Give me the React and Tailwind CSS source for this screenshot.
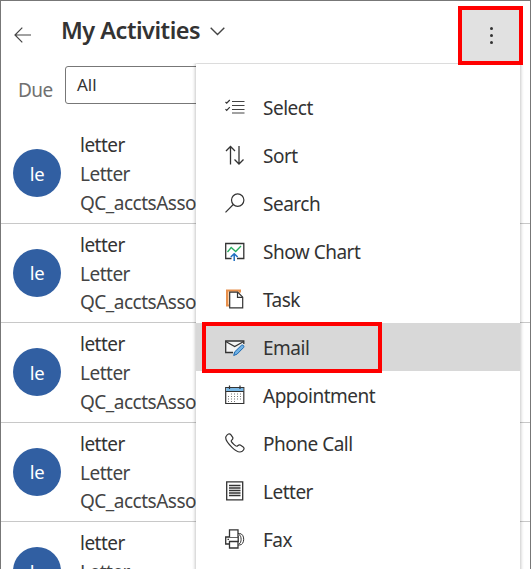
import React from "react";

function Svg({ children }) {
  return (
    <svg width="20" height="20" viewBox="0 0 20 20" fill="none" stroke="#333" strokeWidth="1.2" className="shrink-0">
      {children}
    </svg>
  );
}

const icons = {
  select: (
    <Svg>
      <path d="M7 4.500h12.500M7 8.500h12.500M7 12.500h12.500M7 16h12.500" stroke="#444" />
      <path d="M.5 5l1.200 1.200L4.800 3M.5 12.200l1.200 1.200 3.100-3.200" />
    </Svg>
  ),
  sort: (
    <Svg>
      <path d="M5.500 19.500V1.500M1 6L5.500 1.500 10 6M14 1v18M9.500 14.500l4.500 4.500 4.500-4.500" strokeWidth="1.300" />
    </Svg>
  ),
  search: (
    <Svg>
      <circle cx="12.700" cy="7.100" r="6.200" />
      <path d="M8.300 11.500L.5 19.300" />
    </Svg>
  ),
  chart: (
    <Svg>
      <path d="M6.500 17.500H.7V2.500h18.100v15H12" strokeWidth="1.300" />
      <path d="M2.500 11L6.200 6.500l4.500 4L16 5" stroke="#27ae60" strokeWidth="1.300" />
      <path d="M9.200 20v-7M5.800 16l3.400-3.300 3.400 3.300" stroke="#1f6fc0" strokeWidth="1.500" />
    </Svg>
  ),
  task: (
    <Svg>
      <path d="M4 16.500H2V1.500h13v2" stroke="#e8904c" strokeWidth="2" fill="#fbd0a8" />
      <path d="M4.700 3.200h8l5 5v10.600h-13z" fill="#fff" />
      <path d="M12.500 3.200v5.200h5.200" />
    </Svg>
  ),
  email: (
    <Svg>
      <path d="M8 15.500H.7V4h18.100v3" fill="#f4f4f4" strokeWidth="1.300" />
      <path d="M.7 4.500L9.700 9.500l9-5" />
      <path d="M8.700 18.500l1.100-3.700 6.600-6.500c1.500-1 3.200.7 2.200 2.200l-6.500 6.600z" fill="#71b2e5" stroke="#1b68b0" strokeWidth="1" />
    </Svg>
  ),
  appointment: (
    <Svg>
      <path d="M.7 2.500h18.100v16H.7z" fill="#fff" />
      <path d="M1.300 3h17v3.500h-17z" fill="#78b7e5" stroke="none" />
      <path d="M.7 6.500h18.100M4.500.5v3.500M15 .5v3.500" />
      <path d="M6 9h11M3 11.500h14M3 14h14M3 16.500h9" stroke="#777" strokeDasharray="1 2" />
    </Svg>
  ),
  phone: (
    <Svg>
      <path d="M1 3.500C2.500 1 4.500 0 5.800 1.600l1.900 2.800c.7 1.200-.2 2.100-1.200 3-.8.800.1 1.700 2.300 3.900 1.700 1.700 2.700 2.500 3.600 1.700 1-.9 1.700-1.700 2.900-1l2.900 1.900c1.600 1.200.7 3.200-1 4.400-2.600 1.700-6.500-.2-10.200-3.900C2.600 10.100-.4 6.500 1 3.500z" />
    </Svg>
  ),
  letter: (
    <Svg>
      <path d="M1.700.8h16v18h-16z" fill="#fff" strokeWidth="1.300" />
      <path d="M4 4.500h11.500M4 7h11.500M4 9.500h11.500M4 12h11.500M4 14.500h11.500" strokeWidth="1.300" />
    </Svg>
  ),
  fax: (
    <Svg>
      <path d="M4 15H.7V8h12.500v5" strokeWidth="1.300" />
      <path d="M4.500 8V.8h8.500V8" fill="#fff" strokeWidth="1.300" />
      <path d="M4.500 12.500h8.500v6.500H4.500z" fill="#fff" strokeWidth="1.300" />
      <path d="M13 4.500h1.500c5.600 0 5.600 11.500 0 11.500H13M14 5.500c2.800 1.200 2.800 8.500 0 9.500" strokeWidth="1" />
      <path d="M2.500 10.300h1.500" />
    </Svg>
  ),
};

const menu = [
  ["select", "Select"],
  ["sort", "Sort"],
  ["search", "Search"],
  ["chart", "Show Chart"],
  ["task", "Task"],
  ["email", "Email"],
  ["appointment", "Appointment"],
  ["phone", "Phone Call"],
  ["letter", "Letter"],
  ["fax", "Fax"],
];

function Activity() {
  return (
    <div className="flex h-[99.5px] shrink-0 border-b border-[#c8c8c8] pl-[12px]">
      <div className="mt-[25px] flex size-[48px] shrink-0 items-center justify-center rounded-full bg-[#315fa2] pt-px text-[18.5px] tracking-[-0.4px] text-white">le</div>
      <div className="ml-[19px] pt-[7.300px] text-[19px] leading-[28.800px] tracking-[-0.5px] text-[#444]">
        <div className="text-[#333]">letter</div>
        <div>Letter</div>
        <div>QC_acctsAssociated</div>
      </div>
    </div>
  );
}

export default function App() {
  return (
    <div className="relative flex h-[569px] w-[531px] flex-col overflow-hidden border-x border-t border-[#777] bg-white font-['Noto_Sans',sans-serif] text-[#333]">
      <header className="relative z-10 flex h-[63px] shrink-0 items-start pl-[13px]">
        <svg width="17" height="16" viewBox="0 0 17 16" fill="none" stroke="#444" strokeWidth="1.200" className="mt-[26px]">
          <path d="M17 8H1M8.300.7L1 8l7.300 7.300" />
        </svg>
        <h1 className="ml-[30px] mt-[11px] text-[23.5px] font-semibold leading-[36px] tracking-[-0.5px] text-[#333]">My Activities</h1>
        <svg width="15" height="9" viewBox="0 0 15 9" fill="none" stroke="#444" strokeWidth="1.400" className="ml-[10px] mt-[26px]">
          <path d="M.7.800l6.800 6.800L14.300.8" />
        </svg>
        <button className="ml-auto mr-[7px] mt-[5px] flex h-[59px] w-[65px] shrink-0 flex-col items-center justify-center gap-[4px] border-4 border-[#f00] bg-[#e1e1e1] pl-px">
          <span className="size-[3px] rounded-full bg-[#333]" />
          <span className="size-[3px] rounded-full bg-[#333]" />
          <span className="size-[3px] rounded-full bg-[#333]" />
        </button>
      </header>
      <div className="flex h-[60px] shrink-0 items-start pl-[17px]">
        <span className="mt-[12px] w-[47px] text-[19px] leading-[28px] tracking-[-0.5px] text-[#707070]">Due</span>
        <div className="mt-[2px] flex h-[38px] w-[200px] items-center rounded-[3px] border border-[#777] pl-[11px] text-[17px]">All</div>
      </div>
      <main className="flex flex-col">
        <Activity />
        <Activity />
        <Activity />
        <Activity />
        <Activity />
      </main>
      <nav className="absolute left-[195px] top-[63px] h-[520px] w-[324px] bg-white pt-[19px] shadow-[0_0_3px_1px_rgba(0,0,0,0.22)] [clip-path:inset(-1px_-5px_0_-5px)]">
        {menu.map(([icon, label]) => (
          <div key={icon} className={icon === "email" ? "relative flex h-[48px] items-center bg-[#d8d8d8] pl-[29px]" : "flex h-[48px] items-center pl-[29px]"}>
            {icons[icon]}
            <span className="ml-[18px] pt-[3px] text-[19px] tracking-[-0.5px]">{label}</span>
            {icon === "email" && <span className="absolute -top-px left-[6px] h-[51px] w-[180px] border-4 border-[#f00]" />}
          </div>
        ))}
      </nav>
    </div>
  );
}
